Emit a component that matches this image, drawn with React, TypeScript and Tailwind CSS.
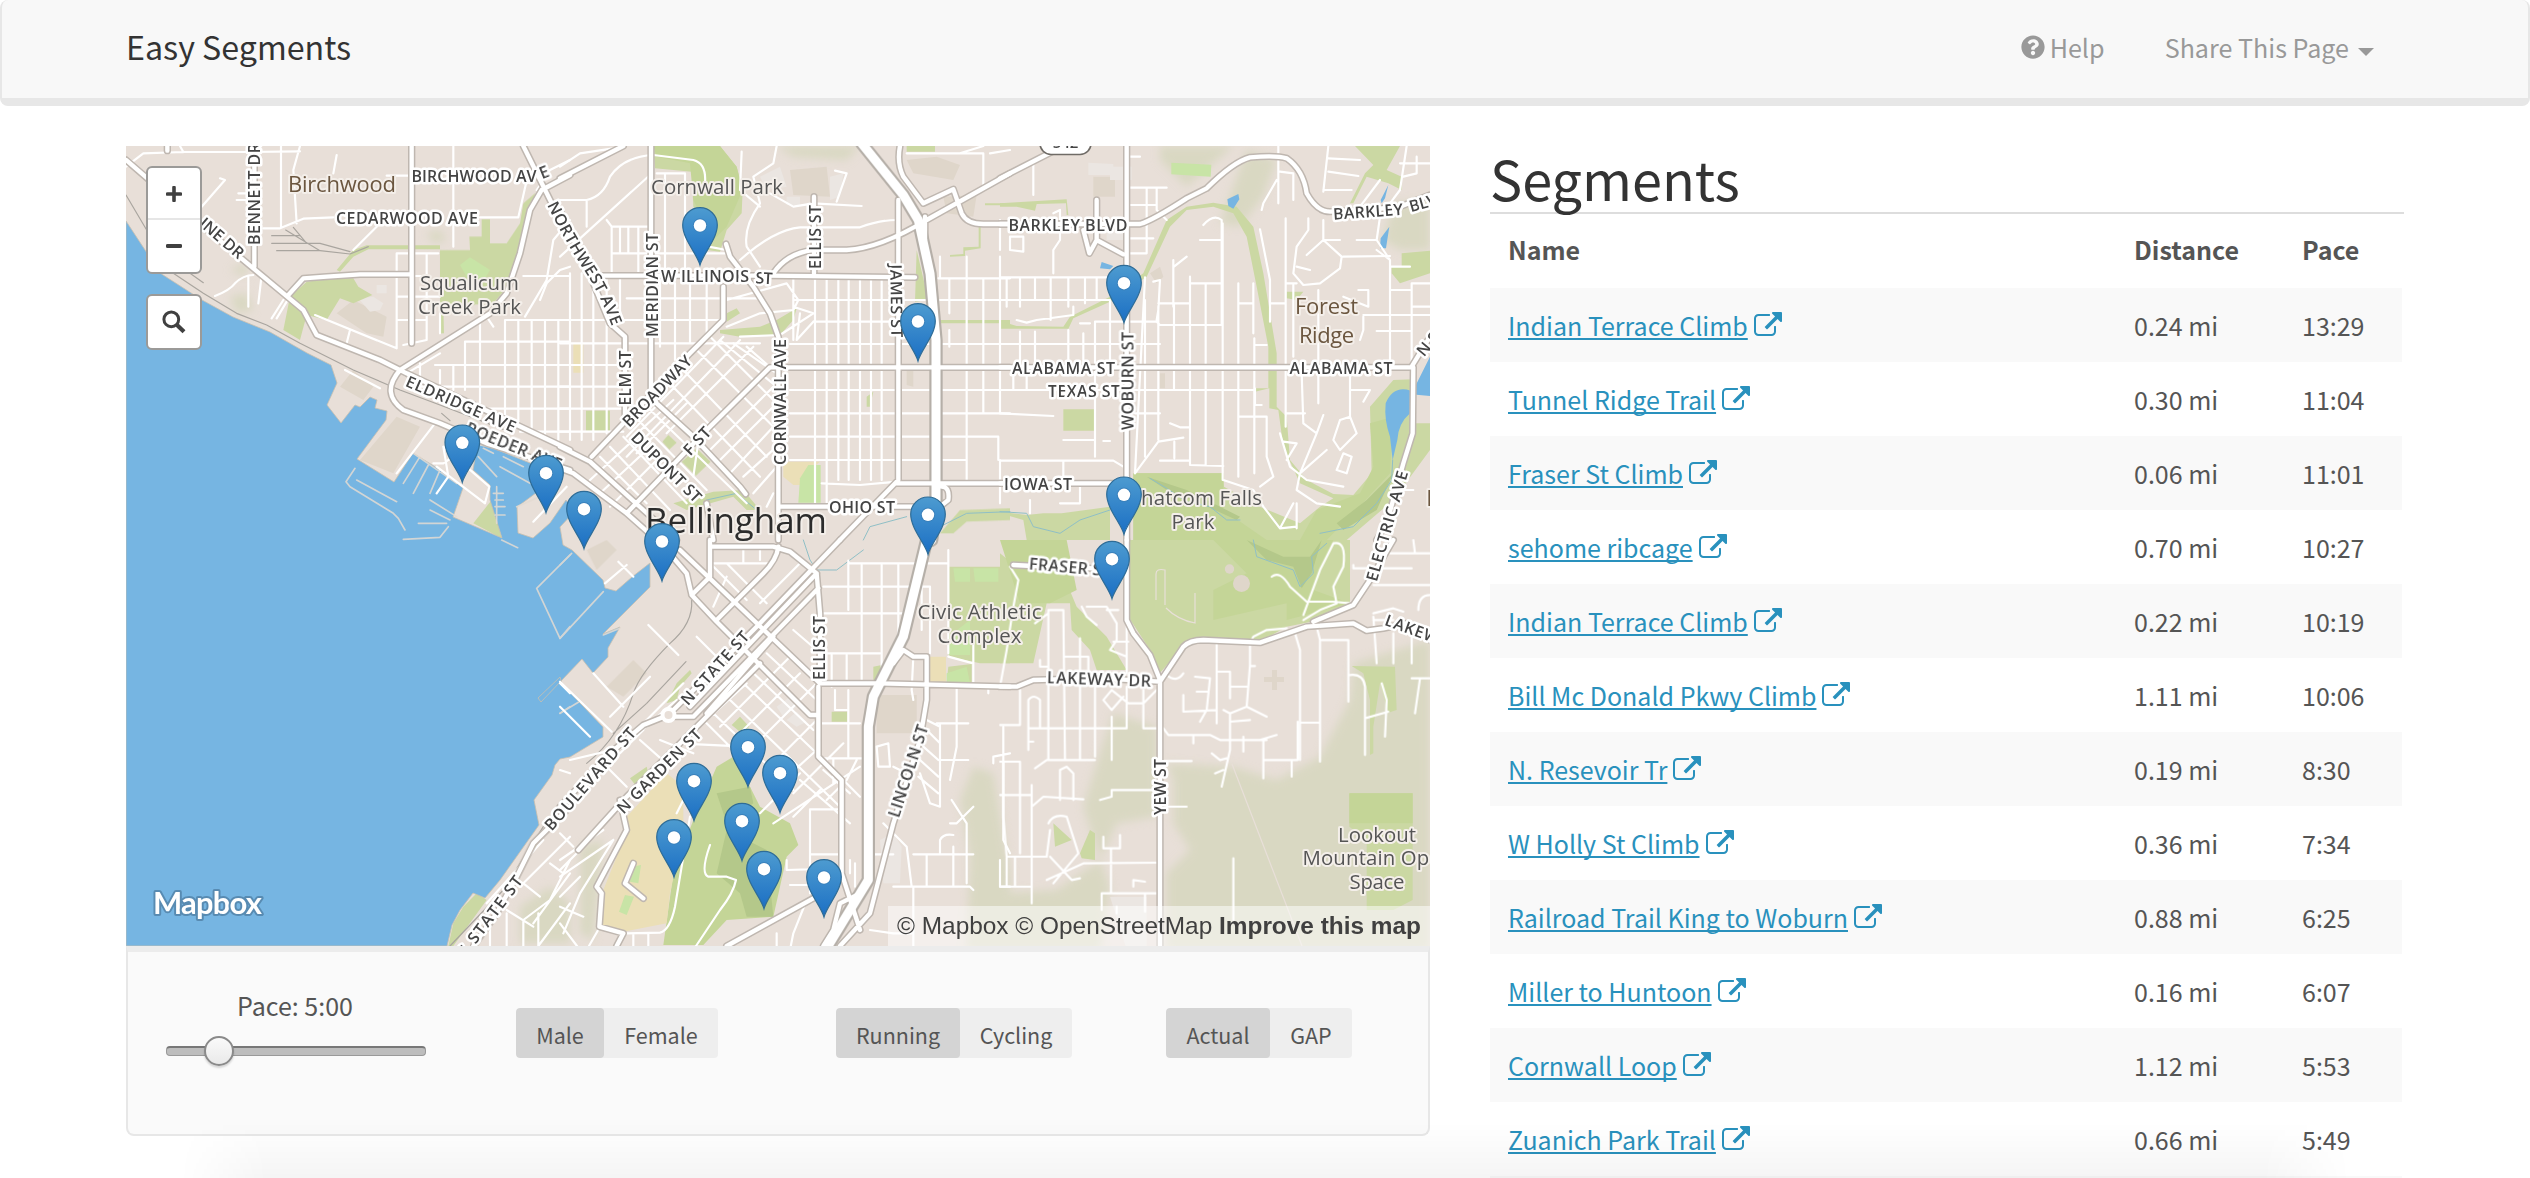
import React from "react";
import { FaQuestionCircle } from "react-icons/fa";

/* ------------------------------------------------------------------ */
/* Map geometry: every sheet is drawn on its own grid, 3 units / pixel */
/* ------------------------------------------------------------------ */

type Sheet = "A" | "B" | "C" | "D" | "E" | "F";
type Shape = [Sheet, string];

const ORIGIN: Record<Sheet, string> = {
  A: "translate(120 140) scale(.33333)",
  B: "translate(560 140) scale(.33333)",
  C: "translate(1000 140) scale(.33333)",
  D: "translate(120 540) scale(.33333)",
  E: "translate(560 540) scale(.33333)",
  F: "translate(1000 540) scale(.33333)",
};

const WATER =
  "M126 221L147 253 160 273 202 300 233 317 270 332 307 353 331 365 337 383 327 405 341 423 355 405 360 407 370 397 377 400 375 408 387 411 386 420 357 459 394 482 413 453 437 468 463 488 453 517 502 538 490 500 490 485 473 470 478 442 530 463 552 480 540 490 517 507 518 533 533 538 550 523 566 500 574 512 560 527 563 545 572 550 603 580 605 588 616 591 632 577 650 563 650 587 603 634 620 627 608 648 608 657 593 673 582 659 541 702 538 698 560 677 562 684 603 727 603 737 570 757 560 759 555 765 552 775 534 800 539 825 500 880 485 898 473 893 460 910 452 925 447 946 126 946Z";

const FOREST: Shape[] = [
  ["B", "M650 18H900L860 60 700 50Z"],
  ["C", "M480 18H700L640 70 560 140 480 60Z"],
  ["C", "M740 30L830 60 790 170 720 260 660 250Z"],
  ["C", "M1180 190L1290 180V330H1200L1150 300Z"],
  ["F", "M500 670L700 680 830 720 960 650 1050 480 1060 370 1290 300V1230H500L500 1000 570 930 520 850 520 720Z"],
  ["F", "M340 520L470 560V830L350 850 300 960 330 1040 300 1230H0V1060L170 1050 300 960 250 800 300 640Z"],
  ["E", "M1240 680L1300 700 1350 1000V1230H1220L1230 950 1200 780Z"],
  ["E", "M60 920L130 900 100 1200 60 1180Z"],
  ["A", "M920 280L960 270 980 300 940 310ZM330 470L380 460 400 510 350 520ZM330 390L380 370 380 410Z"],
  ["D", "M1200 1100L1290 1040 1350 1090V1210H1200Z"],
];

const PARK: Shape[] = [
  ["A", "M960 330H1050L1048 290H1085V238H1110V310L1160 310 1200 250 1210 190 1245 160 1225 260 1180 420 1120 490 970 500 972 580 960 580Z"],
  ["A", "M490 570L510 470 560 425 640 415 700 415 715 440 757 465 700 490 660 475 620 540 560 525 540 600Z"],
  ["A", "M740 316H960V328H745L700 350 660 395 650 390 700 330Z"],
  ["A", "M1115 1080L1145 1195 1060 1150Z"],
  ["B", "M280 18H480L530 80 548 150 545 220 500 270 480 335 440 330 445 260 400 200 395 95 285 85Z"],
  ["B", "M480 570L600 560 650 540 710 505 700 540 660 585 540 590 480 580ZM500 520L530 505 540 520 500 545Z"],
  ["B", "M78 812H150V872H78ZM307 905L325 885 350 908 328 928ZM365 965L410 925 452 965 408 1007Z"],
  ["B", "M340 1090L460 1055 550 1050 600 1110 560 1110 520 1070 380 1110ZM1070 330L1105 480 1065 485ZM920 770L940 755 930 800 920 800Z"],
  ["B", "M1130 540H1350V565L1325 550H1130ZM1275 190H1350V196H1275ZM1262 240V325L1215 332 1215 348 1170 350V345L1210 342V322L1256 320V240ZM1040 18H1125V35H1040Z"],
  ["B", "M1140 1180L1200 1110 1350 1105V1140L1220 1145 1180 1180Z"],
  ["C", "M0 190L200 178 205 225 200 225 198 190 110 192 105 212 50 200 0 200Z"],
  ["C", "M0 543L50 558 190 560 210 530 330 470 430 400 500 240 560 200 640 188 710 200 760 260 790 400 830 640 830 800 860 830 870 960 920 1020 1000 1062 1060 1065 1115 1000 1110 800 1180 720 1240 718V850L1290 850V930L1180 1080 1040 1200H400V1000L670 1000 672 1040 780 1100 900 1150 960 1100 1000 1075 900 1030 850 920 835 810 808 805V745L765 755V745H805L805 620 770 440 740 290 700 220 640 200 560 210 510 260 440 410 330 485 220 535 205 566 0 566Z"],
  ["C", "M190 808H282V872H190ZM0 1115L80 1125 130 1120 185 1120 330 1100V1200H80L70 1140 0 1120ZM1065 18H1200L1160 90 1205 110 1205 150 1165 130 1100 110 1060 190 1050 190 1095 100 1120 75ZM1205 340L1290 332V400L1200 430 1175 400V380H1205ZM860 455H910L890 480 860 475Z"],
  ["E", "M1168 80H1350V370H1260L1168 350ZM815 515H862V545H815ZM515 555L540 530 568 560 545 580ZM210 715L260 680 265 700 230 740ZM1165 380L1235 372V430H1160ZM940 380L965 375 960 420 940 425ZM320 490L350 430 390 390 395 400 360 440 350 480Z"],
  ["F", "M0 40L50 80H180L230 200 320 290 380 390H290L270 330 215 270 210 190H140L100 370H0Z"],
  ["F", "M385 0H1050V200L960 240 860 260 780 305 600 295 540 330 470 410 450 330 385 230Z"],
  ["F", "M1055 378L1185 380 1190 510 1165 518 1140 430 1120 560 1120 640 1110 645 1110 480 1090 400ZM240 940L270 870 285 880V960L245 955ZM1048 760H1238V1080L1180 1110H1100V900L1048 860ZM160 850L215 900 165 920Z"],
  ["D", "M985 1218L1000 1150 1030 1100 1070 1060 1100 1080 1000 1218ZM1180 1000L1250 890 1270 880 1200 1000Z"],
];

const WOODED: Shape[] = [
  ["E", "M310 1215L340 1000 400 840 470 680 520 650 570 740 600 800 690 850 715 915 680 950 640 1130 500 1140 430 1215Z"],
  ["F", "M400 0H1000L940 150 1050 190 860 240V190L640 240 640 150 740 100 640 0Z"],
  ["F", "M1048 760H1238V850H1048ZM0 0H200L230 150 150 190H60Z"],
  ["C", "M400 1000H670V1110L800 1200H400ZM1180 830L1170 1000 1060 1120 980 1200H900L950 1110 1080 1060 1120 980 1110 850Z"],
  ["B", "M280 18H480L530 80 548 150 500 260 460 300 400 180 390 70 290 50Z"],
];

const WOODED_DARK: Shape[] = [
  ["E", "M500 870L620 930 640 1130 560 1130 540 1060 470 1000ZM470 760L570 740 580 790 500 850Z"],
  ["F", "M740 0L850 50 930 50 965 0 935 100 905 145 880 80 800 60Z"],
  ["C", "M440 1010L560 1050 720 1130 710 1140 600 1090 500 1050ZM1180 1000L1130 1110 1030 1170 1010 1150 1100 1080Z"],
];

const CAMPUS: Shape[] = [
  ["E", "M200 830L320 700 370 740 370 880 330 1060 320 1150 190 1175 120 1170 130 1050 190 900ZM1110 350H1158V430H1110Z"],
  ["B", "M40 612H70V698H40ZM670 965H780L740 1000V1035H700L670 1010Z"],
];

const PITCH: Shape[] = [
  ["A", "M1020 375L1050 352 1110 390 1080 440 1040 410Z"],
  ["B", "M720 1015L745 975H782V1088H715Z"],
  ["C", "M514 68L634 74 632 110 514 103Z"],
  ["E", "M215 980L243 975 235 1030 210 1025ZM195 1065L222 1070 200 1125 177 1115ZM1180 85H1230V125H1185ZM1240 85H1315V125H1245ZM1165 290L1230 240V345L1165 345ZM1160 400L1220 380 1230 430H1160Z"],
];

const BLOCK: Shape[] = [
  ["A", "M650 520L700 480 800 530 790 590 740 580ZM720 960L830 830 900 860 820 1000ZM660 740L700 690 760 740 730 780Z"],
  ["B", "M690 90L800 80 810 170 700 165ZM1040 60L1130 50 1200 75 1180 120 1060 100ZM1150 170L1250 165 1240 230 1160 220ZM1040 680H1060V740L1040 735Z"],
  ["C", "M280 110H345V170H280ZM450 400L480 380 490 410 470 430ZM480 700H495V745H480Z"],
  ["E", "M80 30L140 0 170 30 110 90ZM950 465H1070V580H950ZM140 440L220 360 260 400 190 470Z"],
];

const PALE: Shape[] = [
  ["A", "M715 475L760 470 790 490 780 510 750 515ZM770 435H800V460H770Z"],
  ["B", "M600 110L660 80 680 140 620 150ZM680 170H720V195H680ZM810 110L850 100 840 170 810 180Z"],
  ["C", "M265 68L340 72V105H265ZM330 80H395V120H330ZM320 250H370V300H320Z"],
  ["E", "M650 500L690 470 710 500 670 530ZM680 540L710 515 740 545 710 560ZM1245 310L1270 320 1265 365 1245 360ZM960 900L1000 880 1025 920 1020 1030H970Z"],
  ["F", "M330 1070H440V1230H380Z"],
];

const PONDS: Shape[] = [
  ["C", "M682 178L715 162 718 178 700 206 685 198ZM300 385L305 366 340 378 330 388ZM1157 790Q1180 735 1232 752L1230 820Q1195 850 1192 900L1178 960 1170 890Q1152 840 1157 790ZM1245 740L1290 650V768L1225 762ZM1142 180L1165 135 1155 175 1145 190ZM1140 325L1142 295 1168 260 1158 325Z"],
];

const DOCKS: Shape[] = [
  ["A", "M705 985L678 1025 690 1040 820 1120 835 1135 855 1170M710 1020L830 1085M850 1198L960 1192 985 1160M880 940L1010 1030M900 950L850 1030M925 975L880 1060M960 990L930 1060M1080 915L1200 940M1075 950L1130 1010M1140 980L1230 1030M1130 1040V1150M1120 1060H1150M1125 1080H1150M1125 1100H1155M1125 1125H1155M930 1080L1010 1130M930 1110L990 1140M895 1150H980M1090 925L1120 940M1150 950L1210 980M1190 1100L1260 1070"],
  ["D", "M1350 45L1250 145 1320 295 1350 260M1145 0L1193 23M1320 520L1350 500"],
  ["E", "M0 75L35 40M130 155L0 295M0 520L55 487M180 265L130 285"],
];

const MINOR: Shape[] = [
  ["A", "M18 80L70 40 190 36H380L540 34M190 36L180 18M483 18V260M430 265H480L550 236 640 232M1000 18V320M1225 100L1195 232H1080M770 260L700 330M245 200L315 120 300 115M385 410V500M425 405L415 490M285 468Q330 450 345 430 370 405 400 405M540 18L520 90 530 250M640 100L650 45M490 480L455 535M500 485L470 535M585 525L830 625M690 570L680 610M830 340V625M830 340H955M920 340V600L850 615M830 408H920M830 470H960M830 540H920M960 500V580M1350 60L1290 90 1250 150M1350 380L1320 390 1280 430 1260 480M1350 240L1300 300 1280 420 1215 530M1210 408H1350M1155 540V840M1155 540H1350M1195 540V860M1235 540V870M1275 540V890M1315 540V900M1080 540V790M1035 605H1350M1035 605V750M1120 560L1080 500M945 675H1350M1000 675V750M960 690V730M900 740H1350M1080 806H1350M1200 875H1350M900 670V740M945 850L830 1000M940 970H970L1000 950M950 980L1095 1090 1108 1040 970 920 985 1010M950 1060L985 1010M675 690L780 745M1240 1145L1340 1040M860 700 L960 640M350 180H380M355 160H380M870 107H800"],
  ["B", "M0 80L60 40 160 25M0 180H80Q130 170 150 110 190 50 280 45L400 60Q440 70 435 130M80 180V260M0 350L270 105M290 100H375M315 100V400M375 100V400M155 260V400M155 260H270M155 340H500M180 260V340M205 260V340M235 260V400M140 240L155 260M30 400V900M65 400V900M100 400V900M140 400V880M180 400V540M200 475H600M0 540H480M0 610H600M0 675H200M0 740H190M0 806H200M0 875H190M300 400V620M345 430V660M390 430V610M440 430V600M545 35L540 150 600 200M650 18L640 70 580 110 600 190Q550 260 560 320L600 380M540 360Q640 270 720 262L900 262Q960 240 1010 240M630 160L700 200 760 190 905 198M825 92L860 100 830 185M445 320L500 330M700 415V600M765 415V1090M800 415V1090M835 415V1020M866 415V1020M900 415V1020M933 415V1020M965 415V1020M700 480H1130M760 545H1010M690 612H1130M690 750H1110M690 820H1110M690 890H1110M690 960H1110M1140 480H1350M1140 612H1350M1140 750H1350M1140 820H1350M1140 890H1315V960M1140 960H1220M1135 415H1350M785 1030L900 1035 1010 1025M1168 415V520M1168 570V620M1220 350V960M1270 415V820M1320 240V330M1140 350V415M1320 350V820M1040 40H1270V150M1200 40L1270 18M1290 40L1350 30M1220 960V1030M720 520L710 600 760 545M500 480L680 430 715 480 700 510 600 520 500 560M540 590L660 585 760 520 700 500"],
  ["B", "M350 670L620 950M310 710L600 1010M400 620L640 860M440 580L650 790M480 600L650 740M520 610L650 700M560 620L640 690M250 790L560 1090M225 830L440 1050M190 890L380 1090M150 920L330 1110M120 950L260 1090M490 590L200 890M540 600L200 950M580 620L320 880M640 740L440 940M640 800L480 960M640 860L510 1000M650 920L550 1010M650 980L580 1060M380 790L230 940M340 780L210 900M300 950L150 1100M260 930L120 1060M220 900L90 1020M640 1060L620 1100M420 870L400 1010"],
  ["C", "M100 60V165M0 412H320M0 480H330M20 412V500M60 412V500M105 412V480M152 412V540M205 412V500M255 412V490M290 412V480M50 540L80 548 110 540 220 525V500M240 550L270 550M285 545H470L480 555H665V240Q640 220 610 255M600 300H665M330 480V680M0 612H480M60 575V680M105 575V680M205 570V680M250 580V680M285 545V680M0 750H760M40 690V750M80 690V750M285 690V950M0 820L160 828M190 900H285M0 962H340L370 980M190 965V1020M310 903H330M0 1090V960M90 1080V1120M240 1040V1090H180M30 290H70V335L30 330ZM160 220L180 210V300L160 330V400M385 143H500M385 195H470M440 143V340H390M390 295H460M385 50H420M470 143V210L500 240M435 412L405 1000M435 480V950M475 500V900M522 490V750M522 380L560 350M460 425L480 420 475 510 470 540M520 360V500M570 410V750M570 430H665M617 430V975M475 490H570M480 820H405M510 850L540 862H570M405 1000L475 905 550 893M523 905V955M480 962H570M570 750V975L670 978M668 250V1020M715 430V1010M760 430V580M716 490H760M763 595V1000M763 615H800M716 830H800V950L820 1010 780 1040M670 1020L760 1050 790 1100 840 1165 890 1160M780 268L810 420V545M810 490H855M857 235V860M857 820H915M765 745V795H785M835 18V190M840 95L880 100V180M830 120L790 190 785 210M985 18L970 155M985 55L1080 60M985 95L1075 108M970 150L1055 150M925 235V270L890 320 880 400 910 435 960 430 1020 385 1025 350 970 300V240M1020 300H970L920 345M1030 350L1170 348M890 380L930 390M860 430H890M880 435V650M1070 300H1130M1130 330L1170 360V680M1170 380H1230M1090 525H1290M1235 430V690M1235 430H1290M1130 573H1235M1170 450H1230M1075 450H1105V500L1030 470M1090 530V570L1080 600M1240 500H1290M955 450V790M905 700L910 850 950 880 900 1000M970 825L950 880M1050 700V830L1070 880 1020 930 1000 900 1020 840 1050 830M1030 940L1055 950 1040 1000 1010 990ZM980 930L900 1000 890 1050 950 1090 1020 1100M840 880L870 980 920 1020 1030 1040M850 905L890 910 860 960M1050 750H1110L1090 785M1220 18L1200 150 1140 230 1130 300 1170 360M1200 70H1290M1210 110L1250 100V50M1140 120L1080 200M1240 1050H1205M880 1090L840 1165M890 1090V1165M1000 700H960"],
  ["E", "M135 130L200 75M175 65L220 110M265 255L355 345M410 290L470 350M100 400L190 500M0 425L155 575M370 430L200 600M0 500L90 590M270 410L150 530M350 480L200 610M200 620L30 660M250 570L180 640M300 600L400 640M90 700L150 640M140 680L200 740M240 600L330 680M260 560L310 520M450 70L560 180M500 70L620 190M550 30V70M600 25V60M460 70H640M680 30L720 70 600 190M500 110L460 200M540 420L770 640M500 470L850 810M460 520L700 750M560 380L760 570M620 340L770 480M660 310L760 400M700 270L770 330M560 640L770 430M620 690L770 540M520 600L720 400M480 560L690 350M440 540L560 430M660 730L770 630M700 760L850 610M640 850L900 680M700 830L780 750M600 820L720 700M720 720L870 850M790 690L870 760M800 780L860 720 890 660M350 610L560 620M430 540L530 640M790 140L1110 140M865 62V210M905 75V430M965 75V430M1015 75V300M865 70H1165M1085 70V270M780 220H1050M780 340H960M815 345V440M860 345V430M825 450V510H865M865 450V650M770 550H900M780 655H905M820 655V730M840 808L750 808V1060M750 943H840M680 960V990L840 985M690 1035H760M900 770L850 720M940 943H1000M1165 30V340M1110 140V340M1165 350L1240 370M1060 350L1055 450 1060 480M1240 310V430M1190 440V620L1170 720M1285 440V460M1130 550H1225M1140 660H1225M1140 550V800M1100 540L1140 560M1080 700L1110 790 1140 800M1100 570L1140 610M1090 620L1135 660M1080 660L1135 710M1075 710L1135 760M1175 780L1220 850V1030M1170 850L1190 850 1240 800M950 620L985 610 990 680 955 680ZM970 850L1040 920 1055 1040M1000 680L1020 690M1060 943H1240M1100 943V1040M1140 943V900Q1150 880 1180 885M1180 920V1040M1000 1040H1230L1240 1050M1300 670V650L1350 640M1330 560V900L1350 940M1320 960V1040H1350M1060 1180H1000L930 1170M885 970V1040M1060 1040V1230M870 1000V960"],
  ["E", "M450 915Q420 1000 445 1010L500 1010 528 1020Q520 1060 480 1110L400 1230M350 820L370 780M390 830L345 1100Q330 1170 300 1178L200 1180M220 1180V1230M265 1180V1230M0 880L40 920M0 960L130 870M0 1010L160 900M60 930L0 990M60 1010L0 1070M160 900L60 1060 10 1180M70 1130L0 1100M120 1160L80 1230M650 1180V1230M740 1080L700 1180 690 1230M0 1150L60 1230"],
  ["F", "M30 80L55 120 40 200 20 330 0 440M145 210V660M145 210H190L195 660M105 250L145 220M240 295V660M195 350H265V400M120 360V380H145M285 430V650M245 200L260 230 290 255M260 200L320 200 350 250 350 300 330 330 380 350M380 240V400M340 305H385M320 210H355M60 450V555H0M85 480V630M85 480Q100 460 120 480V560M85 565H380V440M335 530V660M85 605H100M310 480L335 450 385 490H430L470 450M310 480L335 510 370 470M430 450V565H490L505 585H630L660 600H780L830 585M580 590V610M105 685L140 660H285M60 665V940M0 665H60M10 665V830L20 950H140L150 870M180 780V690L200 680 220 700V780M95 765H0M95 735V1090M95 800L130 770 250 778M145 850Q160 820 200 830L235 940 160 1030M20 950V1040M45 950V1040M0 1040H90M140 1020L250 970 470 968M150 950L215 1020 240 1015M335 770V750H455M335 770L300 780M480 663H575M500 800H560M310 890V925H360V885M333 925V1060M305 1060H470M305 1060V1110M435 1060V1115M350 1100V1120M400 1040V1020L435 1025M550 465V515L650 510M585 410L630 415 620 510 600 545M590 455H625M650 310V550M650 395H690V475M690 440H740M750 310V375L740 500 690 520V630L665 740M750 378H765M740 500L800 530M690 545L750 540M670 510L690 520M730 590V635M790 600V715M780 600H800M790 660H893V545M885 280L900 330V660M875 665V710M950 260L960 300V665M900 548H960M965 300H1045V485M1050 405Q1090 400 1095 440V645M1095 535L1165 515M1145 430L1160 480 1155 590M1120 230L1130 370M1180 280V370M1235 280V370M1235 415H1290M1260 415L1245 520M1170 40H1290M1240 0L1245 40M1120 135H1290M1060 75V85H1235M1120 220L1180 205 1210 215M1255 210Q1255 165 1290 165M1120 240H1180M815 110Q840 90 870 140L920 185 1000 185 1050 190M910 225L960 90 1000 10Q1040 0 1030 80L1000 140 1010 190 960 210 910 240M750 310L760 290 800 270 860 265M550 400Q530 430 500 405M700 955V1140M635 640L660 660 680 655M645 700L670 690"],
  ["D", "M1270 900L1100 1090M1350 890L1210 1030M1210 1030L1260 1070M1290 970L1330 1000M1350 960L1310 1040 1290 1080 1210 1140M1160 1110L1240 1160M1160 1120V1218M1210 1140V1218M1255 1120V1218M1350 1090L1255 1218M1110 1160V1218M1350 700L1320 690M1350 1000L1240 1150M1350 460L1320 430"],
];

const RAIL: Shape[] = [
  ["A", "M18 165L80 270 160 400 250 460 350 520 440 555 540 610 700 690 840 750 960 795 1180 880M455 287H540M455 310H600L690 335M470 332L600 332 690 342 745 320M497 270L600 332M520 262L560 310M965 820L990 842M210 400L250 428"],
  ["E", "M395 180Q400 250 330 310 240 400 220 460 180 590 80 670M378 365L260 490 160 580"],
  ["D", "M1270 860L1150 1050 990 1218"],
];

const CREEK: Shape[] = [
  ["C", "M0 1115L80 1120 100 1160 180 1180 240 1140 330 1110M450 1015L500 1045 560 1085 630 1100 680 1140 720 1140M1178 960L1175 1020 1130 1090 1060 1160 960 1180"],
  ["B", "M440 1080L530 1060 590 1110M910 1200L930 1160 1040 1130M1140 1160L1220 1120 1350 1115"],
  ["E", "M730 0L750 60 770 90 830 90 910 30"],
  ["F", "M760 0L770 50 880 90 900 140 940 100 935 50 980 10"],
];

const MAJOR: Shape[] = [
  ["A", "M142 18V32M403 18V380M18 60L250 260 400 385 550 510 590 585 780 660 860 700 1180 850 1350 930M505 465L550 415 620 410 720 403H875M875 18V610M1350 105L1265 150 1230 210 1200 340 1160 460 1110 520 840 690Q780 760 850 810L960 850 1100 910 1350 990M1210 18L1320 240 1350 300"],
  ["B", "M0 115L190 18M273 18V750L290 790 400 890 540 1040 557 1062M0 210L100 430 150 550 195 590V830M125 407H620L1065 412M498 312L510 350 580 440 630 520 655 590V1200M490 440V540L390 640 95 950M640 400Q680 340 760 330H860Q960 325 1100 240L1350 100M762 170V400M1020 18Q1010 70 1030 110L1090 190 1180 148 1205 220Q1220 252 1270 252H1350M1015 180V1020L840 1200M200 1120L420 890 630 682H1350M1010 1030H1350M660 1100H1060M0 920L90 965 250 1110 350 1200M0 985L40 1000 200 1120 290 1200M440 1090L460 1200M1145 1040Q1170 1040 1165 1080L1140 1100M1095 230V300"],
  ["C", "M0 115L190 18M380 18V1200M0 252H420Q460 240 560 175L620 145Q700 65 750 52 830 45 860 55 910 90 920 160 950 215 990 215L1100 210 1200 200 1290 165M290 180V300L370 343M250 270L268 340 290 300M0 682H1240L1238 880 1210 970 1160 1150 1130 1200M1235 680L1290 590M0 1030H370"],
  ["E", "M320 30L380 100 395 165 470 245 750 525 775 525M360 30L780 430H960L1350 440M395 165L450 110V0M450 20H640L690 35 770 100 780 220V420M655 20Q650 60 610 100L470 240M840 0L590 260 350 500 325 525 250 555 150 640 0 800M775 145L400 530H330M770 100L390 500M600 370L200 770 55 930M640 290L440 520M775 440V650L845 720V1000L900 1170M180 780L200 870 110 1040 125 1060 118 1160 190 1180 170 1218M220 970L195 1030 250 1075M500 1218L760 1075M1000 370L1030 330 1060 350H1100V480L1080 600 1000 850 930 1120 840 1218M900 1060L840 1090 820 1170 790 1218"],
  ["F", "M380 0V240L400 280 450 345 480 420V1218M0 440H50L100 420 300 415 480 425 550 320Q570 300 610 300L780 308 920 260 1060 250 1100 272 1150 265 1220 250 1290 300M940 245L1060 195 1110 120 1180 0M40 75L100 78 280 85"],
  ["D", "M1350 800L1240 910 1190 1010 1130 1120 1060 1218"],
];

const HIGHWAY: Shape[] = [
  ["B", "M905 10L1030 165 1075 240 1110 400 1128 600V1100L1115 1200"],
  ["E", "M1100 0L1030 290 940 470 925 560V1020L800 1225"],
];

interface StrokeProps {
  shapes: Shape[];
  color: string;
  width: number;
  opacity?: number;
}

function Strokes({ shapes, color, width, opacity = 1 }: StrokeProps) {
  return (
    <g
      fill="none"
      stroke={color}
      strokeWidth={width}
      opacity={opacity}
      strokeLinecap="round"
      strokeLinejoin="round"
    >
      {shapes.map(([sheet, d], i) => (
        <path key={i} d={d} transform={ORIGIN[sheet]} />
      ))}
    </g>
  );
}

function Areas({ shapes, color }: { shapes: Shape[]; color: string }) {
  return (
    <g fill={color}>
      {shapes.map(([sheet, d], i) => (
        <path key={i} d={d} transform={ORIGIN[sheet]} />
      ))}
    </g>
  );
}

/* text, centre x, centre y, angle, length */
const STREETS: [string, number, number, number, number][] = [
  ["BIRCHWOOD AV", 474, 176, 0, 125],
  ["E", 544, 172, -22, 9],
  ["CEDARWOOD AVE", 407, 218, 0, 142],
  ["BENNETT DR", 254.5, 194, -90, 102],
  ["MERIDIAN ST", 652, 285, -90, 104],
  ["W ILLINOIS", 705, 276.5, 0, 88],
  ["ST", 764, 278, 3, 17],
  ["ELLIS ST", 815, 237, -90, 64],
  ["JAMES ST", 896.5, 301, 89, 73],
  ["ELM ST", 625, 378, -90, 55],
  ["BROADWAY", 657, 391, -46, 92],
  ["DUPONT ST", 666.5, 467, 45, 92],
  ["F ST", 697, 441, -47, 32],
  ["CORNWALL AVE", 780.5, 402, -90, 126],
  ["OHIO ST", 862, 507.5, 0, 66],
  ["IOWA ST", 1038, 484.5, 0, 68],
  ["BARKLEY BLVD", 1068, 225, 0, 119],
  ["BARKLEY", 1368, 211.5, -4, 70],
  ["BLV", 1423, 203, -16, 28],
  ["ALABAMA ST", 1063.5, 368.5, 0, 103],
  ["ALABAMA ST", 1341, 368.5, 0, 103],
  ["TEXAS ST", 1084, 391.5, 0, 72],
  ["WOBURN ST", 1127.5, 381, -90, 98],
  ["ELDRIDGE AVE", 461, 404, 23.5, 118],
  ["ROEDER AVE", 514, 446, 22, 102],
  ["N STATE ST", 715, 668, -48, 93],
  ["BOULEVARD ST", 590, 779, -49, 130],
  ["N GARDEN ST", 659, 771, -45, 112],
  ["ELLIS ST", 819.5, 648, -90, 64],
  ["LINCOLN ST", 908, 771, -72, 96],
  ["LAKEWAY DR", 1099, 679, 2, 104],
  ["YEW ST", 1160.5, 787, -90, 56],
  ["FRASER ST", 1070, 567, 5, 82],
  ["S STATE ST", 490, 916, -53, 96],
  ["ELECTRIC AVE", 1387, 526, -74, 114],
  ["N S", 1428, 344, -50, 26],
  ["LAKEW", 1412, 629, 20, 56],
];

const PLACES: [string, number, number, number, number, string][] = [
  ["Birchwood", 342, 184, 108, 22, "#6b563f"],
  ["Squalicum", 469.5, 283, 99, 20.4, "#555"],
  ["Creek Park", 469.5, 306.5, 103, 20.4, "#555"],
  ["Cornwall Park", 717, 186.5, 132, 20.4, "#555"],
  ["Forest", 1326.5, 306.5, 63, 22, "#6b563f"],
  ["Ridge", 1326.5, 335, 55, 22, "#6b563f"],
  ["Whatcom Falls", 1192, 498, 140, 20.4, "#555"],
  ["Park", 1193, 522, 43, 20.4, "#555"],
  ["Civic Athletic", 979.5, 612, 124, 20.4, "#555"],
  ["Complex", 979.5, 635.5, 84, 20.4, "#555"],
  ["Lookout", 1377, 834.5, 78, 20.4, "#555"],
  ["Mountain Open", 1378, 858, 151, 20.4, "#555"],
  ["Space", 1377, 882, 55, 20.4, "#555"],
  ["L", 1432, 498, 10, 22, "#6b563f"],
];

const PINS: [number, number][] = [
  [700, 265],
  [1124, 322.7],
  [918, 361],
  [462.3, 482.3],
  [546, 512.7],
  [1124, 534.3],
  [584, 548.7],
  [928, 554.3],
  [662, 581],
  [1112, 598.7],
  [748, 786.7],
  [780, 812.7],
  [694, 820.7],
  [742, 860.7],
  [674, 877],
  [764, 908.7],
  [824, 917],
];

function Pin({ x, y }: { x: number; y: number }) {
  return (
    <g transform={`translate(${x} ${y})`}>
      <path
        d="M0 0C-3-11-17.3-26-17.3-40A17.3 17.3 0 0 1 17.3-40C17.3-26 3-11 0 0Z"
        fill="url(#pin)"
        stroke="#2e6c97"
        strokeWidth="1.2"
      />
      <circle cy="-39.500" r="7.2" fill="#3a81bb" />
      <circle cy="-39.500" r="6.2" fill="#fff" />
    </g>
  );
}

function MapDrawing() {
  return (
    <svg className="block h-[800px] w-[1304px]" viewBox="126 146 1304 800">
      <defs>
        <linearGradient id="pin" x1="0" y1="0" x2="0" y2="1">
          <stop offset="0" stopColor="#4d9bd0" />
          <stop offset="1" stopColor="#1b6fc4" />
        </linearGradient>
        <filter id="soft" x="-10%" y="-10%" width="120%" height="120%">
          <feGaussianBlur stdDeviation="4" />
        </filter>
      </defs>
      <rect x="126" y="146" width="1304" height="800" fill="#e8dfd8" />
      <g filter="url(#soft)">
        <Areas shapes={FOREST} color="#d9d8c2" />
      </g>
      <Areas shapes={BLOCK} color="#dfd6ca" />
      <Areas shapes={PALE} color="#ebe6e2" />
      <Areas shapes={PARK} color="#cbd8a3" />
      <Areas shapes={WOODED} color="#c4d597" />
      <Areas shapes={WOODED_DARK} color="#b4c88a" />
      <Areas shapes={CAMPUS} color="#ebdfb7" />
      <Areas shapes={PITCH} color="#c8e4a6" />
      <path d={WATER} fill="#76b5e2" stroke="#c9bfae" strokeWidth=".8" />
      <Areas shapes={PONDS} color="#76b5e2" />
      <Strokes shapes={CREEK} color="#8fbfc6" width={3} />
      <g fill="#dfd6ca">
        <circle cx="1241.5" cy="583.5" r="8.500" />
        <circle cx="1229.5" cy="569" r="4.7" />
        <path d="M1272 670h5v7h7v5h-7v8h-5v-8h-8v-5h8z" />
      </g>
      <path
        d="M1156 600v-26q0-6 9-4v35M1166 608q12 12 29 15v-30M1232 764L1302 946"
        fill="none"
        stroke="#e8dfd8"
        strokeWidth="1.2"
      />
      <Strokes shapes={DOCKS} color="#e3dbd2" width={5} opacity={0.85} />
      <Strokes shapes={RAIL} color="#a9a59f" width={3.5} />
      <Strokes shapes={MINOR} color="#ffffff" width={6.5} />
      <Strokes shapes={MAJOR} color="#bfb7b0" width={22} />
      <Strokes shapes={HIGHWAY} color="#b5afa8" width={40} />
      <Strokes shapes={MAJOR} color="#ffffff" width={13} />
      <Strokes shapes={HIGHWAY} color="#ffffff" width={27} />
      <circle cx="668.5" cy="715" r="6" fill="#e8dfd8" stroke="#fff" strokeWidth="4" />

      <rect x="1040" y="128" width="51" height="26.5" rx="11" fill="#fff" stroke="#6f6b66" strokeWidth="1.6" />
      <text
        x="1065.5"
        y="147.5"
        textAnchor="middle"
        className="font-['Open_Sans'] text-[15px] font-semibold"
        fill="#444"
      >
        542
      </text>

      <g
        className="font-['Open_Sans'] text-[16px] font-semibold"
        fill="#444"
        stroke="#fff"
        strokeWidth="5"
        strokeLinejoin="round"
        textAnchor="middle"
        style={{ paintOrder: "stroke" }}
      >
        {STREETS.map(([t, x, y, r, len], i) => (
          <text key={i} transform={`translate(${x} ${y}) rotate(${r})`} y="5.7" textLength={len}>
            {t}
          </text>
        ))}
        <path id="nw" d="M547 205Q566 243 584 270T617 340" fill="none" stroke="none" />
        <text textAnchor="start" textLength="138">
          <textPath href="#nw">NORTHWEST AVE</textPath>
        </text>
        <text transform="translate(222 238) rotate(41)" y="5.7" textLength="53">
          INE DR
        </text>
      </g>
      <g
        className="font-['Open_Sans'] font-medium"
        stroke="#f4efea"
        strokeWidth="4"
        strokeLinejoin="round"
        textAnchor="middle"
        style={{ paintOrder: "stroke" }}
      >
        {PLACES.map(([t, x, y, len, size, color], i) => (
          <text key={i} x={x} y={y + size * 0.36} textLength={len} fontSize={size} fill={color}>
            {t}
          </text>
        ))}
        <text x="736" y="533" textLength="182" fontSize="35" fill="#2c2c2c">
          Bellingham
        </text>
      </g>

      {PINS.map(([x, y]) => (
        <Pin key={`${x}-${y}`} x={x} y={y} />
      ))}

      <text
        x="153"
        y="914"
        textLength="109"
        className="font-['Lato'] text-[31px] font-bold"
        fill="#fff"
        stroke="#588bb2"
        strokeWidth="4"
        strokeLinejoin="round"
        style={{ paintOrder: "stroke" }}
      >
        Mapbox
      </text>
    </svg>
  );
}

function MapPanel() {
  return (
    <div className="relative h-[800px] overflow-hidden">
      <MapDrawing />
      <div className="absolute left-5 top-5 flex flex-col gap-5">
        <div className="flex w-14 flex-col rounded-[6px] border-2 border-[#9b9a98] bg-white text-[#404040]">
          <button className="flex h-[52px] items-center justify-center border-b-2 border-[#e6e6e6]" aria-label="Zoom in">
            <svg className="mt-px size-4" viewBox="0 0 16 16">
              <path d="M8 1.500v13M1.500 8h13" stroke="currentColor" strokeWidth="3.6" strokeLinecap="round" />
            </svg>
          </button>
          <button className="flex h-[52px] items-center justify-center" aria-label="Zoom out">
            <svg className="size-4" viewBox="0 0 16 16">
              <path d="M1.500 8h13" stroke="currentColor" strokeWidth="3.8" strokeLinecap="round" />
            </svg>
          </button>
        </div>
        <button
          className="flex h-14 w-14 items-center justify-center rounded-[6px] border-2 border-[#9b9a98] bg-white text-[#404040]"
          aria-label="Search"
        >
          <svg className="size-6" viewBox="0 0 24 24" fill="none" stroke="currentColor">
            <circle cx="9.3" cy="9.3" r="7.4" strokeWidth="3" />
            <path d="M15 15l7 6.800" strokeWidth="4.2" />
          </svg>
        </button>
      </div>
      <div className="absolute bottom-0 right-0 h-10 w-[542px] whitespace-nowrap bg-white/50 pl-[9px] font-['Liberation_Sans'] text-[24.4px] leading-[39px] text-[#404040]">
        © Mapbox © OpenStreetMap <b>Improve this map</b>
      </div>
    </div>
  );
}

function Toggle({ items }: { items: [string, string][] }) {
  return (
    <div className="flex h-[50px] overflow-hidden rounded-[4px] bg-[#eee] text-[21.5px] leading-[54px] text-[#555]">
      {items.map(([label, cls]) => (
        <button key={label} className={`${cls} rounded-[4px] text-center`}>
          {label}
        </button>
      ))}
    </div>
  );
}

function Controls() {
  return (
    <div className="flex h-[190px] items-start rounded-b-[8px] border-2 border-t-[6px] border-[#e7e7e7] border-t-[#ececec] bg-[#fafafa] pl-[38px]">
      <div className="mt-[33px] flex w-[260px] flex-col items-center">
        <div className="h-10 pr-[2px] text-[25px] leading-10 text-[#555]">Pace: 5:00</div>
        <div className="mt-[11px] flex h-[30px] w-[260px] items-center">
          <div className="relative h-[10px] w-full rounded-[4px] border border-[#999] border-t-2 border-t-[#777] bg-[#bdbdbd]">
            <div className="absolute -top-[12px] left-[37px] size-[30px] rounded-full border-2 border-[#8a8a8a] bg-gradient-to-b from-[#fafafa] to-[#e9e9e9] shadow-[0_2px_2px_rgba(0,0,0,.15)]" />
          </div>
        </div>
      </div>
      <div className="ml-[90px] mt-14 flex">
        <Toggle items={[["Male", "w-[88px] bg-[#d4d4d4]"], ["Female", "w-[114px]"]]} />
        <div className="w-[118px]" />
        <Toggle items={[["Running", "w-[124px] bg-[#d4d4d4]"], ["Cycling", "w-[112px]"]]} />
        <div className="w-[94px]" />
        <Toggle items={[["Actual", "w-[104px] bg-[#d4d4d4]"], ["GAP", "w-[82px]"]]} />
      </div>
    </div>
  );
}

const SEGMENTS: [string, string, string][] = [
  ["Indian Terrace Climb", "0.24 mi", "13:29"],
  ["Tunnel Ridge Trail", "0.30 mi", "11:04"],
  ["Fraser St Climb", "0.06 mi", "11:01"],
  ["sehome ribcage", "0.70 mi", "10:27"],
  ["Indian Terrace Climb", "0.22 mi", "10:19"],
  ["Bill Mc Donald Pkwy Climb", "1.11 mi", "10:06"],
  ["N. Resevoir Tr", "0.19 mi", "8:30"],
  ["W Holly St Climb", "0.36 mi", "7:34"],
  ["Railroad Trail King to Woburn", "0.88 mi", "6:25"],
  ["Miller to Huntoon", "0.16 mi", "6:07"],
  ["Cornwall Loop", "1.12 mi", "5:53"],
  ["Zuanich Park Trail", "0.66 mi", "5:49"],
];

function ExternalLink() {
  return (
    <svg className="ml-[6px] mt-[2px] size-7" viewBox="0 0 1792 1792" fill="currentColor">
      <path d="M1408 928v320q0 119-84.500 203.500t-203.500 84.500h-832q-119 0-203.500-84.500t-84.500-203.500v-832q0-119 84.500-203.500t203.500-84.500h704q14 0 23 9t9 23v64q0 14-9 23t-23 9h-704q-66 0-113 47t-47 113v832q0 66 47 113t113 47h832q66 0 113-47t47-113v-320q0-14 9-23t23-9h64q14 0 23 9t9 23zm384-864v512q0 26-19 45t-45 19-45-19l-176-176-652 652q-10 10-23 10t-23-10l-114-114q-10-10-10-23t10-23l652-652-176-176q-19-19-19-45t19-45 45-19h512q26 0 45 19t19 45z" />
    </svg>
  );
}

function Segments() {
  return (
    <section className="w-[914px] text-[25px] text-[#555]">
      <h1 className="h-[68px] border-b-2 border-[#ddd] text-[54px] leading-[63px] text-[#333]">Segments</h1>
      <div className="w-[912px]">
        <div className="flex h-[74px] pl-[18px] font-bold leading-[71px]">
          <div className="w-[626px]">Name</div>
          <div className="w-[168px]">Distance</div>
          <div>Pace</div>
        </div>
        {SEGMENTS.map(([name, distance, pace], i) => (
          <div key={i} className="flex h-[74px] pl-[18px] leading-[74px] odd:bg-white even:bg-[#f9f9f9]">
            <div className="flex w-[626px] items-center text-[#2991bd]">
              <a className="underline decoration-2 underline-offset-[2px] [text-decoration-skip-ink:none]">{name}</a>
              <ExternalLink />
            </div>
            <div className="w-[168px]">{distance}</div>
            <div>{pace}</div>
          </div>
        ))}
        <div className="h-[74px] bg-[#f9f9f9]" />
      </div>
    </section>
  );
}

export default function App() {
  return (
    <div className="relative h-[1178px] w-[2530px] overflow-hidden bg-white font-['Noto_Sans_CJK_SC',sans-serif]">
      <header className="flex h-[106px] w-full items-center justify-between rounded-[8px] border-x-2 border-b-8 border-[#e7e7e7] bg-[#f8f8f8] pl-[124px] pr-[154px]">
        <div className="pb-[5px] text-[32.2px] text-[#333]">Easy Segments</div>
        <nav className="flex items-center pb-[3px] text-[25.1px] text-[#999]">
          <FaQuestionCircle className="size-6" />
          <span className="ml-[5px] w-[115px]">Help</span>
          <span>Share This Page</span>
          <span className="ml-[9px] mt-[9px] border-x-8 border-t-8 border-x-transparent border-t-[#999]" />
        </nav>
      </header>
      <main className="flex items-start gap-[60px] pl-[126px] pt-10">
        <section className="w-[1304px]">
          <MapPanel />
          <Controls />
        </section>
        <Segments />
      </main>
      <div className="pointer-events-none absolute bottom-0 left-[180px] right-[180px] h-14 bg-gradient-to-b from-transparent to-black/[.04] [mask-image:linear-gradient(to_right,transparent,black_4%,black_96%,transparent)]" />
    </div>
  );
}
